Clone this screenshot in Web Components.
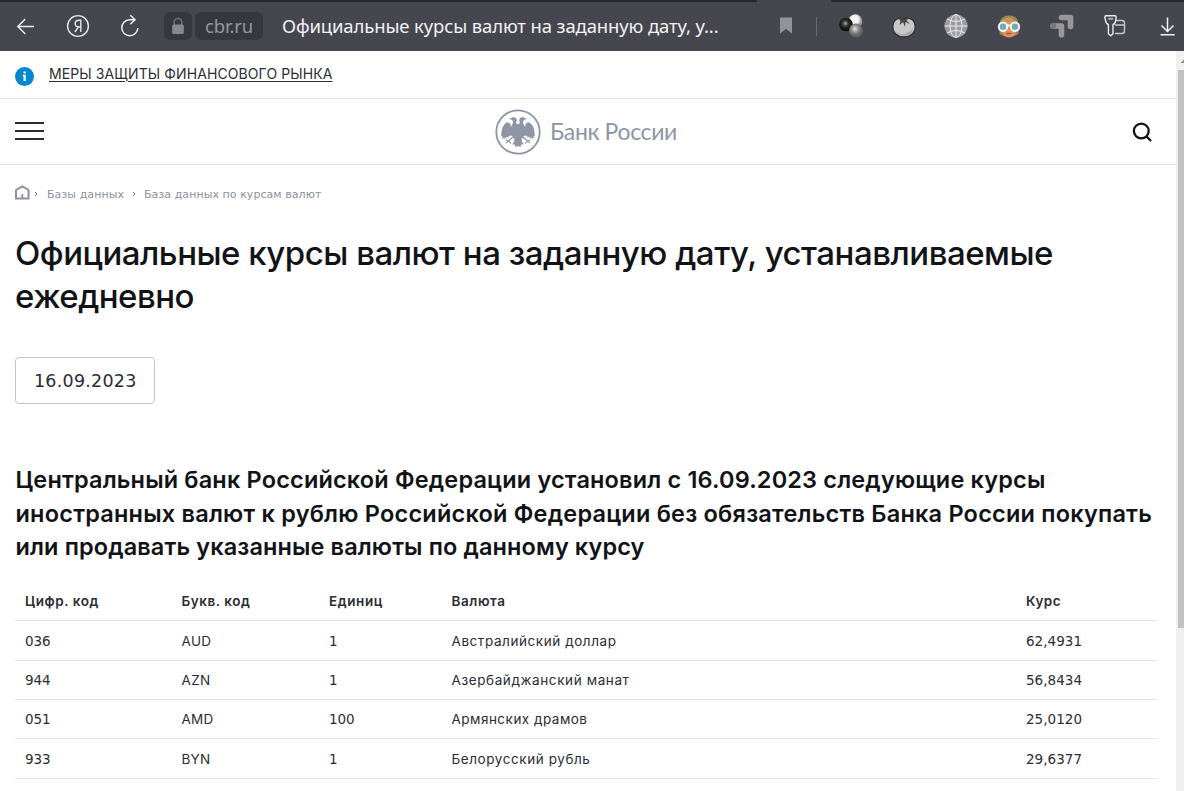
<!DOCTYPE html>
<html lang="ru">
<head>
<meta charset="utf-8">
<title>Официальные курсы валют | Банк России</title>
<style>
html, body { margin: 0; height: 100%; overflow: hidden; background: #fff; }
body { font-family: Inter, "Noto Sans", sans-serif; color: #2b2d33; }
</style>
</head>
<body>
<browser-window></browser-window>
<script>
const define = (name, html, ready) => customElements.define(name, class extends HTMLElement {
  connectedCallback() {
    if (this.shadowRoot) return;
    const t = document.createElement('template');
    t.innerHTML = html;
    this.attachShadow({ mode: 'open' }).append(t.content.cloneNode(true));
    if (ready) ready(this, this.shadowRoot);
  }
});

// A single line of text, tracked to a given measure (attribute "w", px).
define('text-line', `
<style>
:host{display:block;white-space:nowrap;width:max-content}
:host([figures]){font-family:"DejaVu Sans",sans-serif}
:host([underlined]) span{text-decoration:underline;text-underline-offset:2px;text-decoration-thickness:1px}
span{display:inline-block}
</style>
<span><slot></slot></span>`, (el, root) => {
  const w = parseFloat(el.getAttribute('w'));
  if (!w) return;
  const span = root.querySelector('span');
  const n = el.textContent.length;
  span.style.letterSpacing = ((w - span.getBoundingClientRect().width) / n).toFixed(3) + 'px';
});

define('browser-toolbar', `
<style>
:host{display:flex;align-items:center;box-sizing:border-box;height:51px;padding-top:1px;background:linear-gradient(#272732 2px,#46464f 2px);position:relative;font-family:"Noto Sans","Open Sans",sans-serif;color:#f2f2f3}
svg{display:block;flex:none;fill:none}
.tab{position:absolute;left:757px;top:0;width:74px;height:2px;background:#46464f}
.box{height:28px;border-radius:6px;background:#363840;display:flex;align-items:center;justify-content:center;flex:none}
.lock{width:28px;margin-left:25px}
.host{width:68px;margin-left:3px;color:#94979d;font-size:18.5px}
.title{width:438px;margin-left:19px;font-size:18.5px;flex:none}
.host text-line,.title text-line{margin-top:-1px}
.sep{width:1px;height:19px;background:#6b6b74;margin-left:24px;flex:none}
</style>
<div class="tab"></div>
<svg style="margin-left:16px" width="19" height="20" viewBox="0 0 19 20" stroke="#eee" stroke-width="1.5"><path d="M18 10.5H1.8M9.3 3 1.8 10.5 9.3 18"/></svg>
<svg style="margin-left:31px" width="24" height="24" viewBox="0 0 24 24" stroke="#e8e8ea"><circle cx="12" cy="12" r="10.4" stroke-width="1.4"/><path d="M14.8 18V6.2H13c-2.4 0-3.8 1.3-3.8 3.4 0 2.2 1.4 3.4 3.6 3.4h2M12.4 13l-3.6 5" stroke-width="1.4"/></svg>
<svg style="margin-left:30px" width="20" height="24" viewBox="0 0 20 24" stroke="#eee" stroke-width="1.5"><path d="M14.7 5.8H9.4A8 8 0 1 0 17.8 14M10.3 1.2 15 5.8 10.3 10.3"/></svg>
<div class="box lock" style="margin-left:24px"><svg width="14" height="18" viewBox="0 0 14 18"><path d="M3.2 8V5.2a3.8 3.8 0 0 1 7.6 0V8" stroke="#6e7279" stroke-width="1.5"/><rect x="1.2" y="7.5" width="11.6" height="9.5" rx="1.6" fill="#858990"/></svg></div>
<div class="box host"><text-line w="48">cbr.ru</text-line></div>
<div class="title"><text-line w="436.5">Официальные курсы валют на заданную дату, у...</text-line></div>
<svg style="margin-left:59px" width="14" height="18" viewBox="0 0 14 18"><path d="M1.500 0.500h11q.5 0 .5.500V16.500l-6-4.500-6 4.500V1q0-.5.500-.5Z" fill="#929299"/></svg>
<div class="sep" style="margin-left:23px"></div>
<svg style="margin-left:21px" width="26" height="26" viewBox="0 0 26 26"><defs><radialGradient id="w" cx=".4" cy=".4"><stop stop-color="#fff"/><stop offset=".7" stop-color="#eee"/><stop offset="1" stop-color="#999"/></radialGradient><radialGradient id="k" cx=".45" cy=".42"><stop stop-color="#aaa"/><stop offset=".45" stop-color="#333"/><stop offset="1" stop-color="#090909"/></radialGradient><radialGradient id="g" cx=".42" cy=".38"><stop stop-color="#e4e4e4"/><stop offset=".55" stop-color="#8c8c8c"/><stop offset="1" stop-color="#626262"/></radialGradient></defs><circle cx="17.500" cy="8" r="6.800" fill="url(#w)"/><circle cx="8" cy="11.500" r="6.800" fill="url(#k)"/><circle cx="18" cy="17.500" r="6.900" fill="url(#g)"/></svg>
<svg style="margin-left:27px" width="26" height="26" viewBox="0 0 26 26"><path d="M13 5.500C6 3.500 1.800 8 1.800 14S7 24 13 24s11.200-4 11.200-10S20 3.500 13 5.500Z" fill="#c8c8c8" stroke="#343438" stroke-width="1.400"/><path d="M4.500 18c4 5 13 4 17.500-3-1 9-13 10-17.500 3Z" fill="#a4a4a4"/><path d="M7 5l4.500 1.300L12.500 1.500l1 4.800L18 5l-2.500 2.500 3.500 3.500-4.500-2-.5 5-2-5-3.500 3 1-4Z" fill="#434346"/></svg>
<svg style="margin-left:26px" width="26" height="26" viewBox="0 0 26 26"><circle cx="13" cy="13" r="11.500" fill="#9d9da1"/><g stroke="#ececee" stroke-width="1"><path d="M1.500 13h23M13 1.500v23M4 6q9 5 18 0M4 20q9-5 18 0"/><ellipse cx="13" cy="13" rx="6" ry="11.500"/></g></svg>
<svg style="margin-left:27px" width="26" height="26" viewBox="0 0 26 26"><path d="M3.500 21V11Q4 2.500 13 2.500t9.500 8.500v10l-4 2-11 0Z" fill="#a18452"/><path d="M5 10q8-1 10-4 2 3 6 4v7q-2 7.500-8 7.500t-8-7.500Z" fill="#e0905f"/><path d="M5 9Q10 3 16 5l5 5-6-3Q10 10 5 9Z" fill="#b99a60"/><path d="M10.500 20.500h5" stroke="#ae4e35" stroke-width="1.300"/><g fill="#76a9b7" stroke="#f1f6f7" stroke-width="2"><circle cx="7" cy="13.800" r="4.200"/><circle cx="19" cy="13.800" r="4.200"/><path d="M11 12.500h4"/></g></svg>
<svg style="margin-left:27px" width="26" height="26" viewBox="0 0 26 26" stroke="#98989b" stroke-width="5.600" stroke-linecap="round" stroke-linejoin="round"><path d="M12.500 4.500h9V13.500M4 13h8.500v8.700"/><circle cx="4.500" cy="13" r="2.800" fill="#78787c" stroke="none"/></svg>
<svg style="margin-left:28px" width="24" height="24" viewBox="0 0 24 24" stroke="#eee" stroke-width="1.400" stroke-linejoin="round"><path d="M12.500 6.500h6.500q2.500 0 2.500 2.500v8q0 2.500-2.500 2.500h-7M12 11h9.500" stroke="#c7c7cb"/><path d="M3.200 1.800h8.600q1.400 0 1.400 1.500L12.500 7.500q-.4 2-2.500 3.200v9l-2.300 2-2.300-2v-9Q3.300 9.500 2.800 7.500L1.800 3.300q0-1.500 1.400-1.500Z" fill="#46464f"/><path d="M5.200 4.800h5" stroke="#aaa" stroke-width="2"/></svg>
<svg style="margin-left:32px" width="17" height="20" viewBox="0 0 17 20" stroke="#f2f2f2" stroke-width="1.500"><path d="M8.500 1.500V15M2.500 9.500l6 6 6-6M1.500 18.700h14.200"/></svg>
`);

define('info-strip', `
<style>
:host{display:flex;align-items:center;box-sizing:border-box;height:48px;padding-left:15px;border-bottom:1px solid #e6e6e8}
svg{display:block;margin-top:3px}
a{display:block;margin:-2px 0 0 15px;font-size:14px;line-height:18px;color:#2b2d33}
</style>
<svg width="19" height="19" viewBox="0 0 19 19"><circle cx="9.500" cy="9.500" r="9.500" fill="#0487d0"/><path d="M8.500 4.500h2.300v2H8.500ZM7.800 7.800h3V14H8.500V9.300h-.7Z" fill="#fff"/></svg>
<a><text-line underlined w="283.500">МЕРЫ ЗАЩИТЫ ФИНАНСОВОГО РЫНКА</text-line></a>
`);

define('bank-logo', `
<style>
:host{display:flex;align-items:center;color:#8e95a5}
svg{display:block;margin-right:9px}
text-line{font-family:Lato,sans-serif;font-weight:400;font-size:23px;margin-top:-2px}
</style>
<svg width="46" height="46" viewBox="0 0 46 46"><defs><g id="half"><path d="M23.300 15.500 21.500 14.500Q20.500 13 22 11.500L21 9 18.300 8 14 10 17 10.800Q18.500 12.500 17.500 15L16 18Q15.500 13.500 12.500 13.300 8.500 15 7 20L6 27.500 7.300 26.800 7.500 30 9.300 28.500 10 30.300 11.500 27.800 13 28.500 15 26.500 17.500 27 17 29.500 19.500 29 19 33 17 35.500 19.500 35.300 20.500 38 23.300 37Z" fill="currentColor"/><path d="M17 28.500 13.500 32M10.500 31l3 1 2.500 2.500M13.500 32l-2.500 2" fill="none" stroke="currentColor" stroke-width="1.100"/></g></defs><circle cx="23" cy="23" r="21.700" fill="none" stroke="currentColor" stroke-width="1.800"/>
<use href="#half"/><use href="#half" transform="matrix(-1 0 0 1 46 0)"/></svg>
<text-line w="127">Банк России</text-line>
`);

define('site-header', `
<style>
:host{display:grid;grid-template-columns:1fr auto 1fr;align-items:center;box-sizing:border-box;height:66px;padding:0 23px 0 15px;border-bottom:1px solid #e6e6e8}
.menu{display:flex;flex-direction:column;gap:6px;width:29px;margin-top:-2px}
.menu i{height:2px;background:#2b2c33}
bank-logo{margin-left:4px}
.find{justify-self:end;display:block}
</style>
<div class="menu"><i></i><i></i><i></i></div>
<bank-logo></bank-logo>
<svg class="find" width="22" height="22" viewBox="0 0 22 22" fill="none" stroke="#111214"><circle cx="10.300" cy="10" r="7.400" stroke-width="2.300"/><path d="m15.500 15.500 4.600 4.500" stroke-width="2.300"/></svg>
`);

define('bread-crumbs', `
<style>
:host{display:flex;align-items:center;height:20px;font:11px "DejaVu Sans",sans-serif;color:#8a919f}
svg{display:block;flex:none}
.sep{margin:-1px 0 0 0}
text-line{margin-top:0}
</style>
<svg width="15" height="15" viewBox="0 0 15 15" fill="none" stroke="#8a919f" stroke-width="2" style="margin-top:-4px"><path d="M1 13.500V5L7.300 1.300 13.500 5v8.500Z"/><path d="M7.300 14V9" stroke-width="1.800"/></svg>
<svg class="sep" style="margin-left:4px;margin-right:9px" width="4" height="6" viewBox="0 0 4 6" fill="none" stroke="#777e8d"><path d="m1 1 2 2-2 2"/></svg>
<text-line w="77">Базы данных</text-line>
<svg class="sep" style="margin-left:8px;margin-right:8px" width="4" height="6" viewBox="0 0 4 6" fill="none" stroke="#777e8d"><path d="m1 1 2 2-2 2"/></svg>
<text-line w="177.500">База данных по курсам валют</text-line>
`);

define('page-heading', `
<style>h1{margin:0;font-size:33px;line-height:43px;font-weight:500;color:#111317}</style>
<h1><text-line w="1038">Официальные курсы валют на заданную дату, устанавливаемые</text-line><text-line w="179">ежедневно</text-line></h1>
`);

define('date-field', `
<style>:host{display:flex;align-items:center;box-sizing:border-box;width:140px;height:47px;padding-left:18px;border:1px solid #c3c5cb;border-radius:4px;font-size:17.500px}</style>
<text-line figures w="102.500">16.09.2023</text-line>
`);

define('rates-heading', `
<style>h2{margin:0;font-size:23.500px;line-height:33.500px;font-weight:600;color:#111317}</style>
<h2><text-line w="1030">Центральный банк Российской Федерации установил с 16.09.2023 следующие курсы</text-line><text-line w="1136.500">иностранных валют к рублю Российской Федерации без обязательств Банка России покупать</text-line><text-line w="629">или продавать указанные валюты по данному курсу</text-line></h2>
`);

define('rate-row', `
<style>
:host{display:grid;grid-template-columns:156.500px 147.500px 122.500px 574.500px 1fr;align-items:center;box-sizing:border-box;height:39px;padding:1px 0 0 10px;border-bottom:1px solid #e6e6e8;font-size:13.500px}
:host([tall]){height:40px}
:host([head]){font-weight:600}
</style>
<slot></slot>
`);

define('rates-table', `
<style>:host{display:block;width:1142px}</style>
`, (el, root) => {
  const rows = [
    [['Цифр. код', 74], ['Букв. код', 69], ['Единиц', 54], ['Валюта', 54], ['Курс', 35]],
    [['036', 25.5], ['AUD', 30], ['1', 8.5], ['Австралийский доллар', 165], ['62,4931', 56]],
    [['944', 25.5], ['AZN', 29], ['1', 8.5], ['Азербайджанский манат', 178], ['56,8434', 56]],
    [['051', 25.5], ['AMD', 32], ['100', 25.5], ['Армянских драмов', 136], ['25,0120', 56]],
    [['933', 25.5], ['BYN', 29], ['1', 8.5], ['Белорусский рубль', 139], ['29,6377', 56]],
  ];
  root.innerHTML += rows.map((r, i) => `<rate-row ${i === 0 ? 'head tall' : i === 1 || i === 4 ? 'tall' : ''}>` +
    r.map(([t, w]) => `<text-line ${/^\d/.test(t) ? 'figures' : ''} w="${w}">${t}</text-line>`).join('') + '</rate-row>').join('');
});

define('scroll-bar', `
<style>
:host{display:flex;flex-direction:column;width:8px;background:#f0f0f1;overflow:hidden}
svg{display:block;flex:none;height:19px}
i{flex:none;height:558px;margin-left:2px;background:#c1c1c1}
</style>
<svg width="12" height="19" viewBox="0 0 12 19"><path d="M4.500 12 9 7.500V12Z" fill="#8c8c8c"/></svg><i></i>
`);

define('browser-window', `
<style>
:host{display:flex;flex-direction:column;height:791px;width:1184px;overflow:hidden;background:#fff}
.view{display:flex;flex:1;min-height:0}
.page{flex:1;min-width:0;overflow:hidden}
main{display:flow-root;padding:19px 15px 0}
page-heading{display:block;margin-top:28px}
date-field{margin-top:39px}
rates-heading{display:block;margin:59px 0 0 .5px}
rates-table{margin-top:17px}
</style>
<browser-toolbar></browser-toolbar>
<div class="view"><div class="page"><info-strip></info-strip><site-header></site-header>
<main><bread-crumbs></bread-crumbs><page-heading></page-heading><date-field></date-field><rates-heading></rates-heading><rates-table></rates-table></main></div>
<scroll-bar></scroll-bar></div>
`);
</script>
</body>
</html>
